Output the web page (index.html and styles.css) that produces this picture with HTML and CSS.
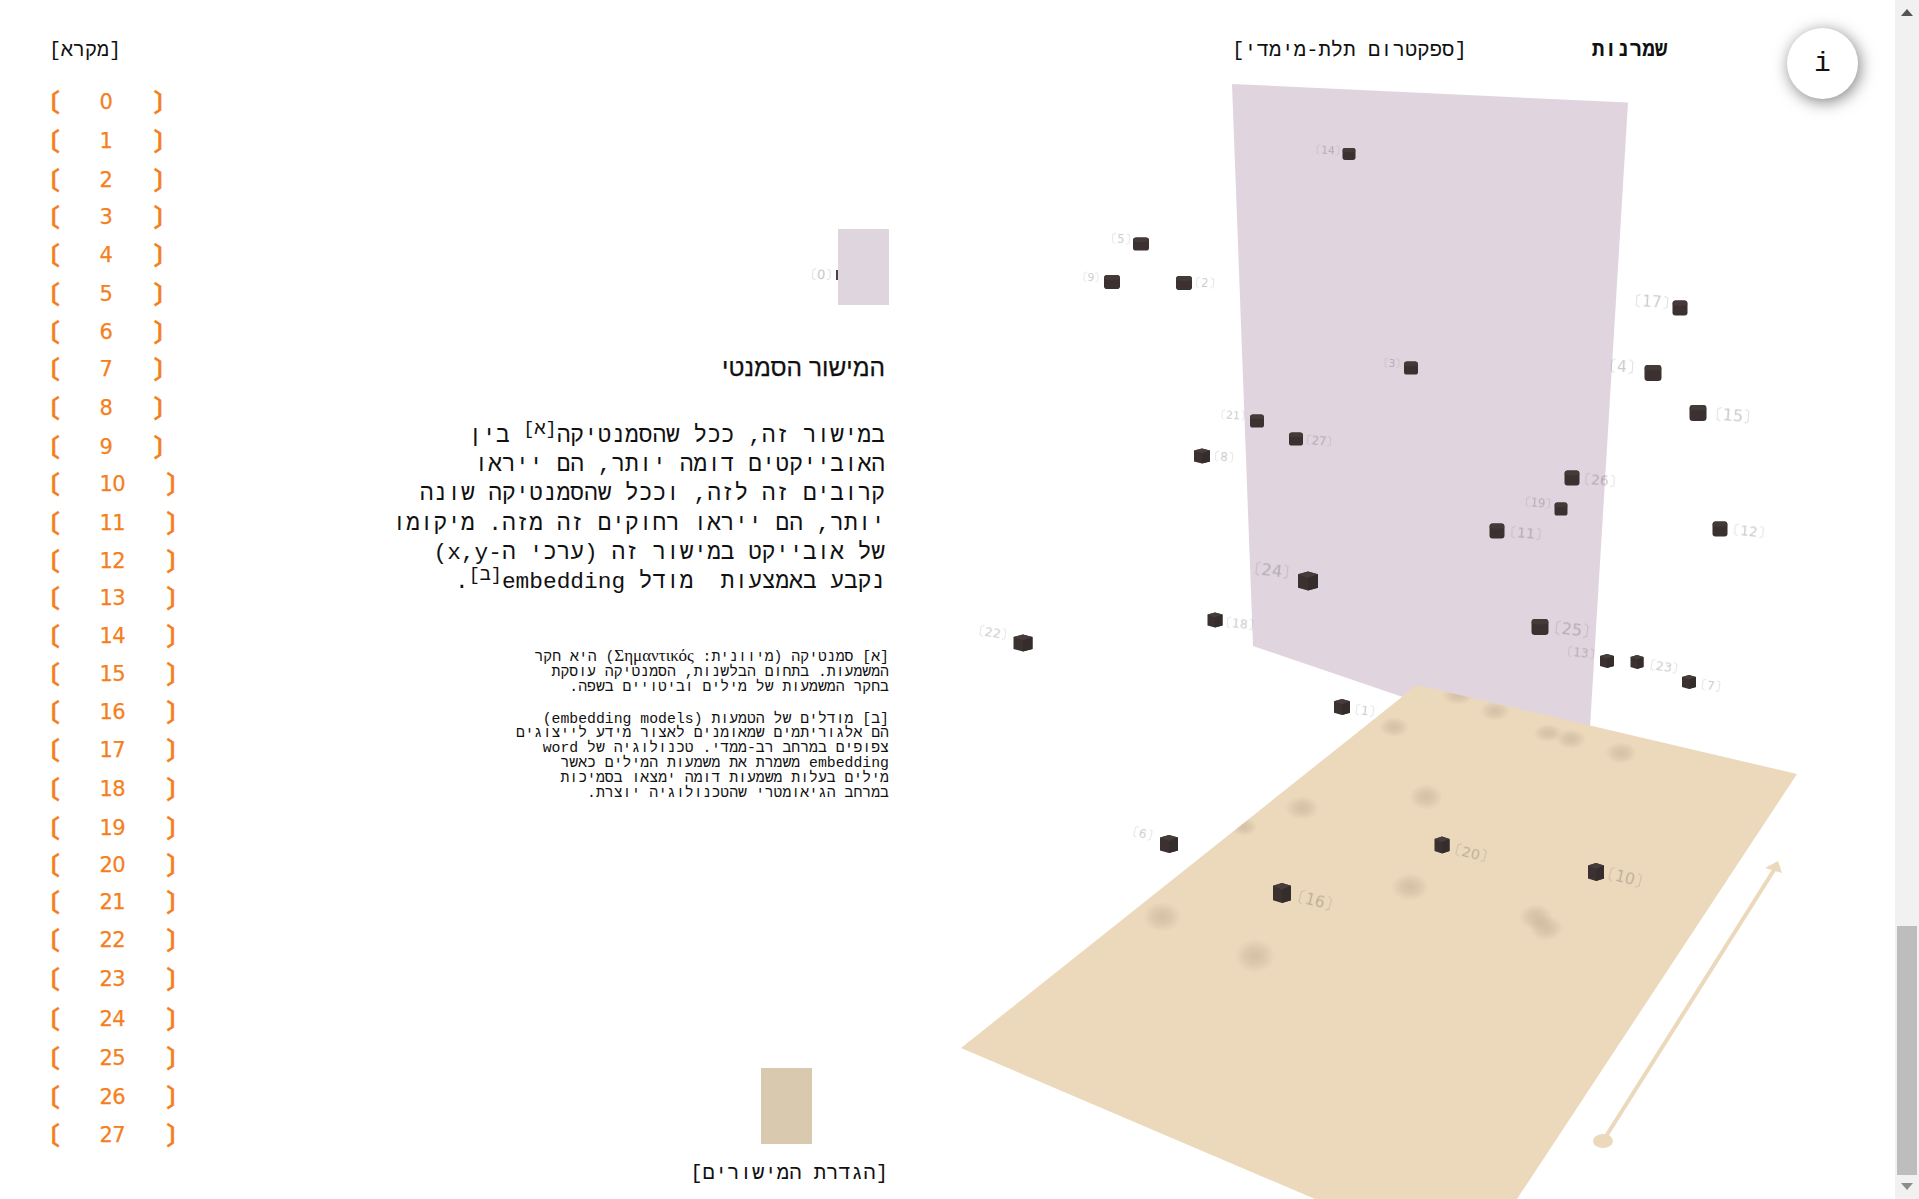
FILE: index.html
```html
<!DOCTYPE html>
<html lang="he">
<head>
<meta charset="utf-8">
<title>המישור הסמנטי</title>
<link rel="stylesheet" href="styles.css">
</head>
<body>
<div class="page">
  <main class="layout">
    <nav class="legend">
      <h2 class="legend-title" dir="rtl">[מקרא]</h2>
      <ul class="legend-list">
        <li class="row"><span class="open">〔</span><span>0</span><span class="close">〕</span></li>
        <li class="row h40"><span class="open">〔</span><span>1</span><span class="close">〕</span></li>
        <li class="row h37"><span class="open">〔</span><span>2</span><span class="close">〕</span></li>
        <li class="row"><span class="open">〔</span><span>3</span><span class="close">〕</span></li>
        <li class="row"><span class="open">〔</span><span>4</span><span class="close">〕</span></li>
        <li class="row h40"><span class="open">〔</span><span>5</span><span class="close">〕</span></li>
        <li class="row h36"><span class="open">〔</span><span>6</span><span class="close">〕</span></li>
        <li class="row"><span class="open">〔</span><span>7</span><span class="close">〕</span></li>
        <li class="row h40"><span class="open">〔</span><span>8</span><span class="close">〕</span></li>
        <li class="row h37"><span class="open">〔</span><span>9</span><span class="close">〕</span></li>
        <li class="row"><span class="open">〔</span><span>10</span><span class="close">〕</span></li>
        <li class="row h40"><span class="open">〔</span><span>11</span><span class="close">〕</span></li>
        <li class="row h36"><span class="open">〔</span><span>12</span><span class="close">〕</span></li>
        <li class="row"><span class="open">〔</span><span>13</span><span class="close">〕</span></li>
        <li class="row h37"><span class="open">〔</span><span>14</span><span class="close">〕</span></li>
        <li class="row h39"><span class="open">〔</span><span>15</span><span class="close">〕</span></li>
        <li class="row"><span class="open">〔</span><span>16</span><span class="close">〕</span></li>
        <li class="row"><span class="open">〔</span><span>17</span><span class="close">〕</span></li>
        <li class="row h40"><span class="open">〔</span><span>18</span><span class="close">〕</span></li>
        <li class="row"><span class="open">〔</span><span>19</span><span class="close">〕</span></li>
        <li class="row h36"><span class="open">〔</span><span>20</span><span class="close">〕</span></li>
        <li class="row"><span class="open">〔</span><span>21</span><span class="close">〕</span></li>
        <li class="row"><span class="open">〔</span><span>22</span><span class="close">〕</span></li>
        <li class="row h40"><span class="open">〔</span><span>23</span><span class="close">〕</span></li>
        <li class="row h39"><span class="open">〔</span><span>24</span><span class="close">〕</span></li>
        <li class="row h40"><span class="open">〔</span><span>25</span><span class="close">〕</span></li>
        <li class="row"><span class="open">〔</span><span>26</span><span class="close">〕</span></li>
        <li class="row"><span class="open">〔</span><span>27</span><span class="close">〕</span></li>
      </ul>
    </nav>

    <section class="article">
      <div class="swatch-row">
        <span class="zero-label">〔0〕</span>
        <span class="zero-cube"></span>
        <div class="swatch swatch-lilac"></div>
      </div>
      <h1 class="title" dir="rtl">המישור הסמנטי</h1>
      <p class="lead" dir="rtl">במישור זה, ככל שהסמנטיקה<sup>[א]</sup> בין<br>האובייקטים דומה יותר, הם ייראו<br>קרובים זה לזה, וככל שהסמנטיקה שונה<br>יותר, הם ייראו רחוקים זה מזה. מיקומו<br>של אובייקט במישור זה (ערכי ה-x,y)<br>נקבע באמצעות&nbsp; מודל embedding<sup>[ב]</sup>.</p>
      <p class="note" dir="rtl">[א] סמנטיקה (מיוונית: <span class="greek">Σημαντικός</span>) היא חקר<br>המשמעות. בתחום הבלשנות, הסמנטיקה עוסקת<br>בחקר המשמעות של מילים וביטויים בשפה.</p>
      <p class="note" dir="rtl">[ב] מודלים של הטמעות (embedding models)<br>הם אלגוריתמים שמאומנים לאצור מידע לייצוגים<br>צפופים במרחב רב-ממדי. טכנולוגיה של word<br>embedding משמרת את משמעות המילים כאשר<br>מילים בעלות משמעות דומה ימצאו בסמיכות<br>במרחב הגיאומטרי שהטכנולוגיה יוצרת.</p>
      <div class="plane-size">
        <div class="swatch swatch-tan"></div>
        <span class="plane-label" dir="rtl">[הגדרת המישורים]</span>
      </div>
    </section>

    <section class="scene">
      <header class="scene-head">
        <span class="head-label" dir="rtl">[ספקטרום תלת-מימדי]</span>
        <span class="head-label head-strong" dir="rtl">שמרנות</span>
      </header>
      <svg class="canvas" viewBox="950 84 945 1115" width="945" height="1115">
        <defs>
          <radialGradient id="blot">
            <stop offset="0" stop-color="#a8947c" stop-opacity=".36"/>
            <stop offset=".5" stop-color="#a8947c" stop-opacity=".22"/>
            <stop offset="1" stop-color="#a8947c" stop-opacity="0"/>
          </radialGradient>
          <clipPath id="floor-clip"><polygon points="1417,685 1797,774 1517,1199 1315,1199 961,1048"/></clipPath>
          <g id="cube-front">
            <rect x="-.5" y="-.5" width="1" height="1" rx=".2" fill="#3a3130"/>
            <path d="M-.48 -.2 Q0 -.1 .48 -.2 V-.32 Q.48 -.5 .3 -.5 H-.3 Q-.48 -.5 -.48 -.32Z" fill="#443b39"/>
          </g>
          <g id="cube-side">
            <path d="M0 -.5 L.5 -.36 V.36 L0 .5 L-.5 .36 V-.36Z" fill="#3a3130"/>
            <path d="M0 -.5 L.5 -.36 L0 -.16 L-.5 -.36Z" fill="#463d3b"/>
            <path d="M0 -.16 L.5 -.36 V.36 L0 .5Z" fill="#352d2c"/>
          </g>
        </defs>

        <polygon class="wall" points="1232,84 1628,102.5 1588,760 1253,646"/>
        <polygon class="floor" points="1417,685 1797,774 1517,1199 1315,1199 961,1048"/>

        <g clip-path="url(#floor-clip)">
          <ellipse fill="url(#blot)" cx="1458" cy="695" rx="16" ry="10"/>
          <ellipse fill="url(#blot)" cx="1495" cy="711" rx="15" ry="10"/>
          <ellipse fill="url(#blot)" cx="1394" cy="727" rx="15" ry="10"/>
          <ellipse fill="url(#blot)" cx="1548" cy="733" rx="15" ry="9"/>
          <ellipse fill="url(#blot)" cx="1571" cy="739" rx="15" ry="10"/>
          <ellipse fill="url(#blot)" cx="1621" cy="753" rx="16" ry="11"/>
          <ellipse fill="url(#blot)" cx="1426" cy="797" rx="17" ry="13"/>
          <ellipse fill="url(#blot)" cx="1302" cy="808" rx="17" ry="12"/>
          <ellipse fill="url(#blot)" cx="1244" cy="827" rx="13" ry="9"/>
          <ellipse fill="url(#blot)" cx="1410" cy="887" rx="19" ry="14"/>
          <ellipse fill="url(#blot)" cx="1536" cy="917" rx="17" ry="13"/>
          <ellipse fill="url(#blot)" cx="1546" cy="928" rx="17" ry="13"/>
          <ellipse fill="url(#blot)" cx="1162" cy="917" rx="19" ry="15"/>
          <ellipse fill="url(#blot)" cx="1255" cy="956" rx="20" ry="17"/>
        </g>

        <path class="arrow-shaft" d="M1603 1141 L1774 870"/>
        <ellipse class="arrow-part" cx="1603" cy="1141" rx="10" ry="7"/>
        <polygon class="arrow-part" points="1778,861 1782,873 1765,868"/>

        <g class="cubes">
          <use href="#cube-front" transform="translate(1349 154) scale(13 12)"/>
          <use href="#cube-front" transform="translate(1141 244) scale(16 13)"/>
          <use href="#cube-front" transform="translate(1112 282) scale(16 14)"/>
          <use href="#cube-front" transform="translate(1184 283) scale(16 14)"/>
          <use href="#cube-front" transform="translate(1411 368) scale(14 13)"/>
          <use href="#cube-front" transform="translate(1257 421) scale(14 13)"/>
          <use href="#cube-front" transform="translate(1296 439) scale(14 13)"/>
          <use href="#cube-side" transform="translate(1202 456) scale(16 15)"/>
          <use href="#cube-side" transform="translate(1308 581) scale(20 19)"/>
          <use href="#cube-side" transform="translate(1215 620) scale(15 15)"/>
          <use href="#cube-side" transform="translate(1023 643) scale(19 17)"/>
          <use href="#cube-side" transform="translate(1342 707) scale(16 16)"/>
          <use href="#cube-front" transform="translate(1698 413) scale(17 16)"/>
          <use href="#cube-front" transform="translate(1572 478) scale(15 15)"/>
          <use href="#cube-front" transform="translate(1561 509) scale(13 13)"/>
          <use href="#cube-front" transform="translate(1497 531) scale(15 15)"/>
          <use href="#cube-front" transform="translate(1720 529) scale(15 15)"/>
          <use href="#cube-front" transform="translate(1540 627) scale(17 16)"/>
          <use href="#cube-side" transform="translate(1607 661) scale(14 14)"/>
          <use href="#cube-side" transform="translate(1637 662) scale(13 14)"/>
          <use href="#cube-side" transform="translate(1689 682) scale(14 14)"/>
          <use href="#cube-front" transform="translate(1680 308) scale(15 15)"/>
          <use href="#cube-front" transform="translate(1653 373) scale(17 16)"/>
          <use href="#cube-side" transform="translate(1169 844) scale(18 18)"/>
          <use href="#cube-side" transform="translate(1442 845) scale(15 17)"/>
          <use href="#cube-side" transform="translate(1596 872) scale(16 18)"/>
          <use href="#cube-side" transform="translate(1282 893) scale(18 20)"/>
        </g>

        <g class="labels">
          <text font-size="10.8" transform="translate(1328 150) rotate(3)">〔14〕</text>
          <text font-size="11.5" transform="translate(1121 239) rotate(4)">〔5〕</text>
          <text font-size="11" transform="translate(1091 277) rotate(4)">〔9〕</text>
          <text font-size="11.5" transform="translate(1205 283) rotate(4)">〔2〕</text>
          <text font-size="11" transform="translate(1392 363) rotate(4)">〔3〕</text>
          <text font-size="11.2" transform="translate(1233 415) rotate(4)">〔21〕</text>
          <text font-size="11.6" transform="translate(1319 441) rotate(5)">〔27〕</text>
          <text font-size="12" transform="translate(1224 457) rotate(5)">〔8〕</text>
          <text font-size="16.4" transform="translate(1272 570) rotate(7)">〔24〕</text>
          <text font-size="12.5" transform="translate(1240 623) rotate(6)">〔18〕</text>
          <text font-size="13" transform="translate(993 632) rotate(9)">〔22〕</text>
          <text font-size="12.8" transform="translate(1365 710) rotate(8)">〔1〕</text>
          <text font-size="16.2" transform="translate(1733 415) rotate(5)">〔15〕</text>
          <text font-size="13.8" transform="translate(1600 480) rotate(5)">〔26〕</text>
          <text font-size="11.6" transform="translate(1538 503) rotate(5)">〔19〕</text>
          <text font-size="14.2" transform="translate(1526 533) rotate(5)">〔11〕</text>
          <text font-size="13.8" transform="translate(1749 531) rotate(6)">〔12〕</text>
          <text font-size="16" transform="translate(1572 629) rotate(7)">〔25〕</text>
          <text font-size="12" transform="translate(1581 653) rotate(7)">〔13〕</text>
          <text font-size="13" transform="translate(1664 666) rotate(8)">〔23〕</text>
          <text font-size="12.5" transform="translate(1711 685) rotate(8)">〔7〕</text>
          <text font-size="15.2" transform="translate(1652 302) rotate(4)">〔17〕</text>
          <text font-size="15.5" transform="translate(1622 367) rotate(4)">〔4〕</text>
          <text font-size="12.5" transform="translate(1143 833) rotate(14)">〔6〕</text>
          <text font-size="14.5" transform="translate(1471 853) rotate(14)">〔20〕</text>
          <text font-size="15.5" transform="translate(1625 878) rotate(14)">〔10〕</text>
          <text font-size="15.5" transform="translate(1315 901) rotate(14)">〔16〕</text>
        </g>
      </svg>
    </section>
  </main>
  <aside class="scrollbar">
    <span class="sb-arrow sb-up"></span>
    <span class="sb-thumb"></span>
    <span class="sb-arrow sb-down"></span>
  </aside>
  <button class="info" type="button">i</button>
</div>
</body>
</html>
```

FILE: styles.css
```css
* { box-sizing: border-box; }
html, body { margin: 0; height: 100%; overflow: hidden; background: #fff; }
body { font-family: "Liberation Mono", "DejaVu Sans Mono", monospace; color: #111; }
h1, h2, p, ul { margin: 0; padding: 0; font-weight: normal; }
ul { list-style: none; }

.page { position: relative; display: flex; width: 1919px; height: 1199px; }
.layout { display: flex; width: 1895px; height: 1199px; }

/* legend */
.legend { width: 400px; padding: 39px 0 0 49px; }
.legend-title { width: 72px; height: 24px; font-size: 20px; line-height: 24px; white-space: nowrap; }
.legend-list { margin-top: 20px; color: #f57f20; font-family: "DejaVu Sans", sans-serif; font-size: 21px; letter-spacing: -.5px; -webkit-text-stroke: .25px #f57f20; }
.row { display: flex; align-items: center; gap: 38px; height: 38px; line-height: 38px; }
.open, .close { width: 25px; margin-bottom: 2px; font-family: "Noto Sans CJK JP", sans-serif; font-size: 25px; font-weight: bold; letter-spacing: 0; }
.open { margin-left: -14px; margin-right: 1.5px; }
.close { margin-left: 3px; }
.h36 { height: 36px; }
.h37 { height: 37px; }
.h39 { height: 39px; }
.h40 { height: 40px; }

/* centre column */
.article { display: flex; flex-direction: column; align-items: flex-end; width: 490px; height: 1199px; padding: 229px 3px 0 0; }
.swatch { width: 51px; height: 76px; }
.swatch-lilac { background: #dfd5df; }
.swatch-tan { margin-right: 76px; background: #d9c9ae; }
.swatch-row { display: flex; align-items: center; height: 76px; margin-right: -2px; }
.zero-label { color: #c9c9c9; font-family: "DejaVu Sans", sans-serif; font-size: 13px; transform: translate(2px, 8px) rotate(4deg); }
.zero-cube { width: 2px; height: 10px; background: #4a4240; transform: translateY(8px); }
.title { margin-top: 48px; margin-right: 2px; font-family: "Liberation Sans", sans-serif; font-size: 24.5px; line-height: 30px; -webkit-text-stroke: .25px #111; }
.lead { margin-top: 39px; margin-right: 2px; font-size: 22.8px; line-height: 29.2px; white-space: nowrap; }
.lead sup { font-size: 18.5px; line-height: 0; vertical-align: 8px; }
.note { margin-right: -2px; font-size: 14.8px; line-height: 14.8px; white-space: nowrap; }
.greek { font-family: "Liberation Serif", serif; font-size: 17px; line-height: 0; }
.lead + .note { margin-top: 53px; }
.note + .note { margin-top: 17px; }
.plane-size { display: flex; flex-direction: column; align-items: flex-end; margin-top: auto; margin-right: -1px; padding-bottom: 13px; }
.plane-label { margin-top: 18px; font-size: 20.6px; line-height: 24px; white-space: nowrap; }

/* scene */
.scene { width: 945px; margin-left: 60px; }
.scene-head { display: flex; gap: 125px; height: 84px; margin-right: -60px; padding: 39px 0 0 282px; font-size: 20.6px; line-height: 24px; }
.head-label { white-space: nowrap; }
.head-strong { font-weight: bold; font-size: 21px; }
.canvas { display: block; }
.wall { fill: #e0d5df; }
.floor { fill: #ecd9bc; }
.arrow-shaft { fill: none; stroke: #ecd9bc; stroke-width: 4; }
.arrow-part { fill: #ecd9bc; }
.cubes { filter: blur(.35px); }
.labels text { font-family: "DejaVu Sans", sans-serif; fill: rgba(70, 60, 60, .28); text-anchor: middle; dominant-baseline: central; filter: blur(.2px); }

/* scrollbar */
.scrollbar { display: flex; flex-direction: column; align-items: center; width: 24px; height: 1199px; background: #f1f1f1; }
.sb-arrow { width: 0; height: 0; border-left: 6px solid transparent; border-right: 6px solid transparent; }
.sb-up { margin-top: 9px; border-bottom: 7px solid #555; }
.sb-thumb { width: 20px; height: 249px; margin-top: 910px; background: #bdbdbd; }
.sb-down { margin-top: 8px; border-top: 7px solid #8d8d8d; }

/* info button */
.info { position: absolute; left: 1787px; top: 28px; width: 71px; height: 71px; border: 0; border-radius: 50%; background: #fff; box-shadow: 2px 3px 16px rgba(0, 0, 0, .5); font-family: inherit; font-size: 28px; color: #111; padding: 0; }
```
